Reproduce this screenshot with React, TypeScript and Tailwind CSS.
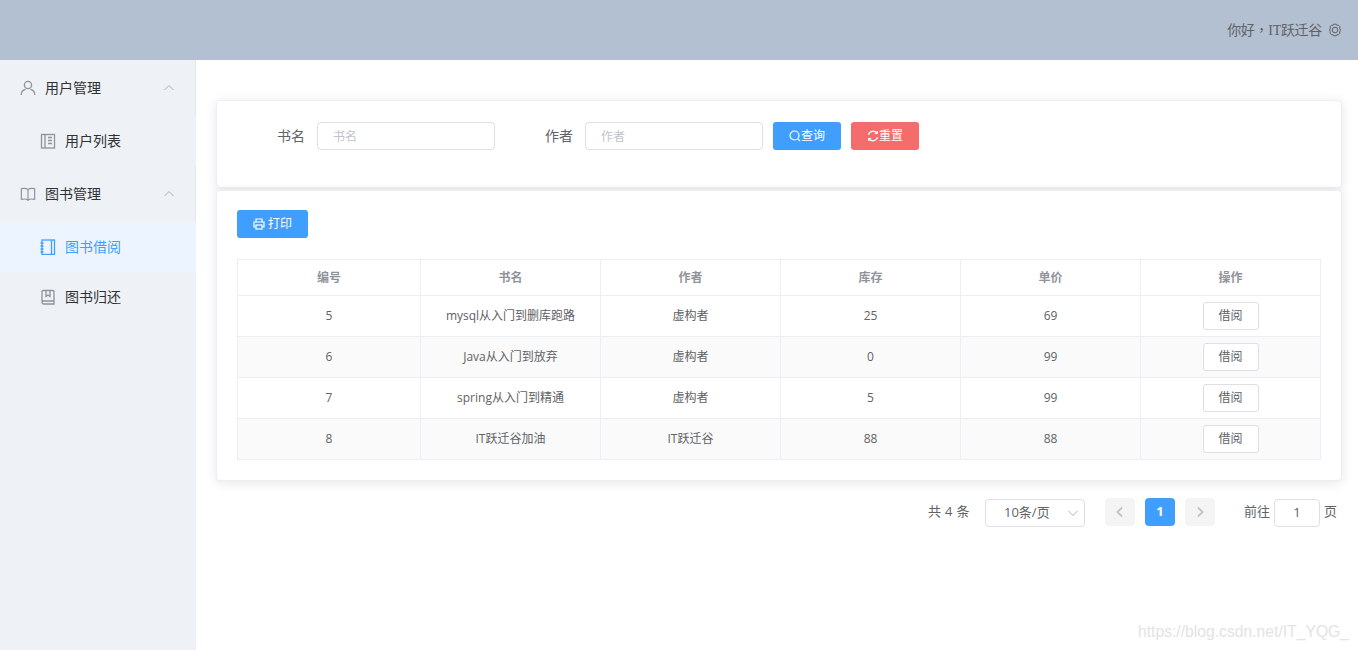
const font = { fontFamily: '"Open Sans", "Noto Sans CJK SC", sans-serif' };

const UserIcon = ({ c = "#909399" }: { c?: string }) => (
  <svg width="16" height="16" viewBox="0 0 16 16" fill="none" stroke={c} strokeWidth="1.3">
    <circle cx="8" cy="5" r="3.6" />
    <path d="M1.200 15c0-3.400 2.600-5.200 4.400-5.600M14.800 15c0-3.400-2.600-5.200-4.400-5.600" />
  </svg>
);
const ListBook = () => (
  <svg width="16" height="16" viewBox="0 0 16 16" fill="none" stroke="#909399" strokeWidth="1.3">
    <rect x="1.500" y="1.500" width="13" height="13.500" />
    <path d="M5 1.500V15M8 4.500h4M8 7.500h4M8 10.500h4" />
  </svg>
);
const OpenBook = () => (
  <svg width="18" height="16" viewBox="0 0 18 16" fill="none" stroke="#909399" strokeWidth="1.3">
    <path d="M9 3C7.500 1.500 4 1.500 1.500 2v12C4 13.500 7.500 13.500 9 15c1.500-1.500 5-1.500 7.500-1V2C14 1.500 10.500 1.500 9 3zM9 3v12" />
  </svg>
);
const NoteBook = () => (
  <svg width="16" height="16" viewBox="0 0 16 16" fill="none" stroke="#409eff" strokeWidth="1.3">
    <rect x="2" y="1" width="12.500" height="14.500" />
    <path d="M11.500 1v14.500M0.500 4h3M0.500 7h3M0.500 10h3M0.500 13h3" />
  </svg>
);
const SaveBook = () => (
  <svg width="16" height="16" viewBox="0 0 16 16" fill="none" stroke="#909399" strokeWidth="1.3">
    <path d="M2 12.500V2.500a1 1 0 0 1 1-1h10a1 1 0 0 1 1 1v12.500H3.500a1.500 1.500 0 0 1 0-3H14" />
    <path d="M6 1.500v6l2-1.500 2 1.500v-6" />
  </svg>
);
const Chevron = ({ up }: { up?: boolean }) => (
  <svg width="12" height="12" viewBox="0 0 12 12" fill="none" stroke="#909399" strokeWidth="1" className="opacity-70">
    <path d={up ? "M1.500 8 6 3.500 10.500 8" : "M1.500 4 6 8.500 10.500 4"} />
  </svg>
);
const Gear = () => (
  <svg width="14" height="14" viewBox="0 0 14 14" fill="none" stroke="#606266" strokeWidth="1">
    <circle cx="7" cy="7" r="2.800" />
    <path d="M5.700 1.200h2.600l.5 1.100 1.500-.2 1.700 1.700-.4 1.300.9 1.900-.9 1.900.4 1.300-1.700 1.700-1.500-.2-.5 1.100H5.700l-.5-1.100-1.500.2L2 10.200l.4-1.300L1.500 7l.9-1.900L2 3.800 3.700 2.100l1.500.2z" />
  </svg>
);
const Search = () => (
  <svg width="12" height="12" viewBox="0 0 12 12" fill="none" stroke="#fff" strokeWidth="1.200">
    <circle cx="5.500" cy="5.500" r="4.500" />
    <path d="m8.800 8.800 2.200 2.200" />
  </svg>
);
const Refresh = () => (
  <svg width="12" height="12" viewBox="0 0 12 12" fill="none" stroke="#fff" strokeWidth="1.200">
    <path d="M1.500 5A4.600 4.600 0 0 1 9.800 3.200M10.500 7a4.600 4.600 0 0 1-8.300 1.800" />
    <path d="M10.300 1v2.500H7.800M1.700 11V8.500h2.500" />
  </svg>
);
const Printer = () => (
  <svg width="12" height="12" viewBox="0 0 12 12" fill="none" stroke="#fff" strokeWidth="1.200">
    <path d="M3 4V1h6v3M3 9H1V4h10v5H9" />
    <rect x="3" y="7" width="6" height="4" />
  </svg>
);

const Item = ({ icon, label, active }: { icon: React.ReactNode; label: string; active?: boolean }) => (
  <div className={`flex items-center h-[50px] pl-10 text-sm ${active ? "bg-[#ecf5ff] text-[#409eff]" : "text-[#303133]"}`}>
    <span className="w-[16px] flex justify-center mr-[9px]">{icon}</span>
    {label}
  </div>
);
const Group = ({ icon, label }: { icon: React.ReactNode; label: string }) => (
  <div className="flex items-center h-[56px] pl-5 pr-[20px] text-sm text-[#303133] border-r border-[#e6e6e6]">
    <span className="w-[16px] flex justify-center mr-[9px]">{icon}</span>
    <span className="flex-1">{label}</span>
    <Chevron up />
  </div>
);

const rows = [
  ["5", "mysql从入门到删库跑路", "虚构者", "25", "69"],
  ["6", "Java从入门到放弃", "虚构者", "0", "99"],
  ["7", "spring从入门到精通", "虚构者", "5", "99"],
  ["8", "IT跃迁谷加油", "IT跃迁谷", "88", "88"],
];
const headers = ["编号", "书名", "作者", "库存", "单价", "操作"];

export default function App() {
  return (
    <div className="relative h-[650px] w-[1358px] overflow-hidden bg-white" style={font}>
      <header className="h-[60px] bg-[#b3c0d1] flex items-center justify-end pr-[16px] text-sm text-[#606266] gap-[6px]">
        <span className="tracking-[-0.3px]">你好<span style={{ fontFamily: '"Noto Sans CJK TC", sans-serif' }}>，</span><span style={{ fontFamily: '"Liberation Serif", serif' }}>IT</span>跃迁谷</span>
        <Gear />
      </header>
      <div className="flex h-[590px]">
        <aside className="w-[196px] shrink-0 bg-[#eef1f6]">
          <Group icon={<UserIcon />} label="用户管理" />
          <Item icon={<ListBook />} label="用户列表" />
          <Group icon={<OpenBook />} label="图书管理" />
          <Item icon={<NoteBook />} label="图书借阅" active />
          <Item icon={<SaveBook />} label="图书归还" />
        </aside>
        <main className="flex-1 pl-5 pr-[18px] pt-10">
          <section className="h-[88px] rounded border border-[#ebeef5] bg-white shadow-[0_2px_12px_0_rgba(0,0,0,0.1)] flex items-start pt-[21px] text-sm">
            <label className="w-[100px] pr-3 text-right h-[28px] leading-[28px] text-[#606266]">书名</label>
            <input readOnly placeholder="书名" className="w-[178px] h-[28px] rounded border border-[#dcdfe6] px-[15px] text-xs outline-none placeholder:text-[#c0c4cc]" />
            <label className="w-[90px] pr-3 text-right h-[28px] leading-[28px] text-[#606266]">作者</label>
            <input readOnly placeholder="作者" className="w-[178px] h-[28px] rounded border border-[#dcdfe6] px-[15px] text-xs outline-none placeholder:text-[#c0c4cc]" />
            <button className="ml-[10px] w-[68px] h-[28px] rounded-[3px] bg-[#409eff] text-white text-xs flex items-center justify-center"><Search />查询</button>
            <button className="ml-[10px] w-[68px] h-[28px] rounded-[3px] bg-[#f56c6c] text-white text-xs flex items-center justify-center"><Refresh />重置</button>
          </section>
          <section className="mt-[2px] h-[291px] rounded border border-[#ebeef5] bg-white shadow-[0_2px_12px_0_rgba(0,0,0,0.1)] px-5 pt-[19px]">
            <button className="w-[71px] h-[28px] rounded-[3px] bg-[#409eff] text-white text-xs flex items-center justify-center gap-[3px]"><Printer />打印</button>
            <table className="mt-[21px] w-[1084px] table-fixed border-collapse text-xs text-[#606266] text-center">
              <colgroup>
                <col className="w-[183px]" /><col className="w-[180px]" /><col className="w-[180px]" /><col className="w-[180px]" /><col className="w-[180px]" /><col className="w-[180px]" />
              </colgroup>
              <thead>
                <tr className="h-[36px]">
                  {headers.map((h) => <th key={h} className="border border-[#ebeef5] font-bold text-[#909399]">{h}</th>)}
                </tr>
              </thead>
              <tbody>
                {rows.map((r, i) => (
                  <tr key={r[0]} className={`h-[41px] ${i % 2 ? "bg-[#fafafa]" : ""}`}>
                    {r.map((c, j) => <td key={j} className="border border-[#ebeef5]">{c}</td>)}
                    <td className="border border-[#ebeef5]">
                      <button className="w-[56px] h-[28px] rounded-[3px] border border-[#dcdfe6] bg-white text-xs text-[#606266]">借阅</button>
                    </td>
                  </tr>
                ))}
              </tbody>
            </table>
          </section>
          <div className="mt-[16px] flex items-center text-[13px] text-[#606266]">
            <span className="ml-[712px] w-[57px] tracking-[0.3px]">共 4 条</span>
            <div className="mt-[2px] w-[100px] h-[28px] rounded border border-[#dcdfe6] flex items-center pl-[18px] pr-[5px] justify-between">10条/页<Chevron /></div>
            <button className="ml-[20px] w-[30px] h-[28px] rounded-sm bg-[#f4f4f5] flex items-center justify-center">
              <svg width="10" height="12" viewBox="0 0 10 12" fill="none" stroke="#c0c4cc" strokeWidth="1.8"><path d="M7 1.500 2.500 6 7 10.500" /></svg>
            </button>
            <button className="ml-[10px] w-[30px] h-[28px] rounded-sm bg-[#409eff] text-white font-bold">1</button>
            <button className="ml-[10px] w-[30px] h-[28px] rounded-sm bg-[#f4f4f5] flex items-center justify-center">
              <svg width="10" height="12" viewBox="0 0 10 12" fill="none" stroke="#c0c4cc" strokeWidth="1.8"><path d="M3 1.500 7.500 6 3 10.500" /></svg>
            </button>
            <span className="ml-[29px]">前往</span>
            <div className="mt-[2px] ml-[4px] w-[46px] h-[28px] rounded border border-[#dcdfe6] flex items-center justify-center">1</div>
            <span className="ml-[4px]">页</span>
          </div>
        </main>
      </div>
      <div className="absolute left-[1138px] top-[620px] text-[15.7px] leading-[24px] text-[#e3e3e3]" style={{ fontFamily: '"Liberation Sans", sans-serif' }}>https://blog.csdn.net/IT_YQG_</div>
    </div>
  );
}
